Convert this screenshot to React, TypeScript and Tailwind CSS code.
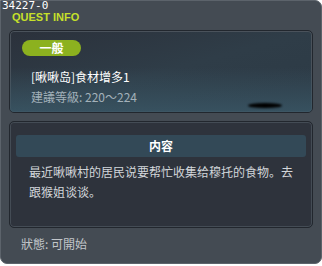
export default function App() {
  const cjk = { fontFamily: '"Noto Sans CJK SC", "Noto Sans", sans-serif' };
  return (
    <div className="w-[322px] h-[266px] bg-white">
      <div
        className="relative w-[322px] h-[264px] rounded-tr-[7px] rounded-b-[7px] border border-[#5c636b] bg-[#444b53] flex flex-col"
        style={cjk}
      >
        {/* quest id overlaps the frame corner */}
        <div
          className="absolute left-[1px] top-0 text-[11px] leading-[10px] text-white"
          style={{ fontFamily: '"DejaVu Sans Mono", monospace' }}
        >
          34227-0
        </div>
        <div
          className="pl-[11px] pt-[10px] h-[29px] text-[11px] font-bold leading-[12px] text-[#c6e02a]"
          style={{ fontFamily: '"Liberation Sans", sans-serif' }}
        >
          QUEST INFO
        </div>
        <div className="relative mx-[8px] h-[83px] rounded-[5px] border border-[#22272e] bg-gradient-to-br from-[#2b313b] via-[#2f3d48] to-[#2c3a45] shadow-[inset_0_0_0_1px_#4a525b] overflow-hidden">
          <div className="absolute inset-x-0 bottom-0 h-[45px] bg-gradient-to-t from-[#3a5766]/80 to-transparent" />
          <div className="absolute left-[238px] top-[72px] w-[34px] h-[5px] rounded-[50%] bg-black blur-[1px]" />
          <div className="relative flex flex-col items-start pl-[12px] pt-[9px]">
            <div className="w-[59px] h-[16px] rounded-full bg-[#8cb11f] text-white text-[12px] font-bold leading-[16px] text-center">
              一般
            </div>
            <div className="mt-[13px] pl-[9px] flex flex-col gap-[4px] text-[12px] leading-[16px]">
              <div className="text-white">[啾啾岛]食材增多1</div>
              <div className="text-[#a3b1ba]">建議等級: 220～224</div>
            </div>
          </div>
        </div>
        <div className="mx-[8px] mt-[8px] h-[107px] rounded-[5px] border border-[#22272e] bg-[#2e333c] shadow-[inset_0_0_0_1px_#444c55] px-[6px] pt-[13px]">
          <div className="h-[22px] rounded-[3px] bg-[#334957] text-center text-[12px] font-bold leading-[22px] text-white">
            内容
          </div>
          <div className="mt-[5px] px-[13px] text-[12px] leading-[20px] text-[#d2d6da]">
            最近啾啾村的居民说要帮忙收集给穆托的食物。去跟猴姐谈谈。
          </div>
        </div>
        <div className="pl-[20px] pt-[8px] text-[12px] leading-[16px] text-[#c2c6ca]">
          狀態: 可開始
        </div>
      </div>
    </div>
  );
}
